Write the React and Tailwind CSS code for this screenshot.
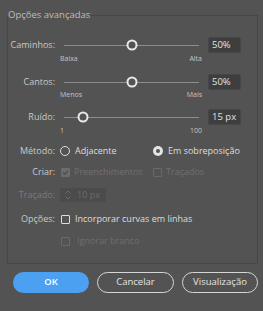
import React from "react";

const font = { fontFamily: '"Open Sans", "Noto Sans", sans-serif' };

function Slider({ pct }) {
  return (
    <div className="relative ml-[8px] w-[135px] h-[16px] flex items-center">
      <div className="w-full h-px bg-[#8c8c8c]" />
      <div
        className="absolute top-1/2 w-[11px] h-[11px] -translate-x-1/2 -translate-y-1/2 rounded-full border-2 border-[#e8e8e8] bg-[#535353]"
        style={{ left: `${pct}%` }}
      />
    </div>
  );
}

function NumBox({ value }) {
  return (
    <div className="ml-[9px] w-[33px] h-[16px] bg-[#3e3e3e] border border-[#474747] rounded-[2px] flex items-center pl-[3px] text-[9.5px] text-[#e2e2e2]">
      {value}
    </div>
  );
}

function Label({ children, disabled }) {
  return (
    <div
      className={
        "w-[48px] shrink-0 text-right pr-[1px] text-[9px] leading-[14px] " +
        (disabled ? "text-[#7a7a7a]" : "text-[#c9c9c9]")
      }
    >
      {children}
    </div>
  );
}

function SliderRow({ label, pct, value, lo, hi, mt, subMt }) {
  return (
    <>
      <div className={"flex items-center h-[16px] " + mt}>
        <Label>{label}</Label>
        <Slider pct={pct} />
        <NumBox value={value} />
      </div>
      <div
        className={
          "ml-[52px] w-[142px] h-[10px] flex justify-between items-center text-[7px] text-[#c4c4c4] " +
          subMt
        }
      >
        <span>{lo}</span>
        <span>{hi}</span>
      </div>
    </>
  );
}

function Checkbox({ checked, disabled }) {
  if (checked) {
    return (
      <div className="w-[9px] h-[9px] rounded-[1px] bg-[#6c6c6c] flex items-center justify-center">
        <svg width="7" height="7" viewBox="0 0 7 7">
          <path d="M1 3.6 L2.8 5.3 L6 1.6" stroke="#4f4f4f" strokeWidth="1.4" fill="none" />
        </svg>
      </div>
    );
  }
  return (
    <div
      className={
        "w-[9px] h-[9px] rounded-[1px] border " +
        (disabled ? "border-[#6a6a6a]" : "border-[#dcdcdc]")
      }
    />
  );
}

export default function App() {
  return (
    <div className="w-[263px] h-[311px] bg-[#535353] overflow-hidden" style={font}>
      <fieldset className="ml-[7px] mt-[9px] w-[251px] border border-[#474747] pb-[15px]">
        <legend className="text-[9.5px] leading-[12px] text-[#bdbdbd]">Opções avançadas</legend>

        <SliderRow label="Caminhos:" pct={50} value="50%" lo="Baixa" hi="Alta" mt="mt-[16px]" subMt="mt-[1px]" />
        <SliderRow label="Cantos:" pct={50} value="50%" lo="Menos" hi="Mais" mt="mt-[10px]" subMt="mt-0" />
        <SliderRow label="Ruído:" pct={14} value="15 px" lo="1" hi="100" mt="mt-[9px]" subMt="mt-[1px]" />

        <div className="flex items-center h-[14px] mt-[8px]">
          <Label>Método:</Label>
          <div className="ml-[4px] w-[93px] flex items-center">
            <div className="w-[10px] h-[10px] rounded-full border border-[#dedede]" />
            <span className="ml-[5px] text-[9px] text-[#dedede]">Adjacente</span>
          </div>
          <div className="flex items-center">
            <div className="w-[10px] h-[10px] rounded-full bg-[#e4e4e4] flex items-center justify-center">
              <div className="w-[4px] h-[4px] rounded-full bg-[#535353]" />
            </div>
            <span className="ml-[5px] text-[9px] text-[#dedede]">Em sobreposição</span>
          </div>
        </div>

        <div className="flex items-center h-[14px] mt-[7px]">
          <Label>Criar:</Label>
          <div className="ml-[5px] w-[92px] flex items-center">
            <Checkbox checked disabled />
            <span className="ml-[4px] text-[9px] text-[#707070]">Preenchimentos</span>
          </div>
          <div className="flex items-center">
            <Checkbox disabled />
            <span className="ml-[4px] text-[9px] text-[#707070]">Traçados</span>
          </div>
        </div>

        <div className="flex items-center h-[14px] mt-[9px]">
          <Label disabled>Traçado:</Label>
          <div className="ml-[4px] w-[46px] h-[14px] bg-[#4b4b4b] rounded-[2px] flex items-center">
            <svg width="14" height="12" viewBox="0 0 14 12" className="ml-[1px]">
              <path d="M4.5 4.5 L7 2 L9.5 4.5" stroke="#686868" strokeWidth="1" fill="none" />
              <path d="M4.5 7.5 L7 10 L9.5 7.5" stroke="#686868" strokeWidth="1" fill="none" />
            </svg>
            <span className="ml-[2px] text-[9px] text-[#6c6c6c]">10 px</span>
          </div>
        </div>

        <div className="flex items-center h-[14px] mt-[10px]">
          <Label>Opções:</Label>
          <div className="ml-[5px] flex items-center">
            <Checkbox />
            <span className="ml-[5px] text-[9px] text-[#dedede]">Incorporar curvas em linhas</span>
          </div>
        </div>

        <div className="flex items-center h-[14px] mt-[8px] ml-[53px]">
          <Checkbox disabled />
          <span className="ml-[7px] text-[9px] text-[#6e6e6e]">Ignorar branco</span>
        </div>
      </fieldset>

      <div className="mt-[8px] ml-[13px] flex gap-[8px]">
        <button className="w-[76px] h-[21px] rounded-full bg-[#4ba0f2] text-white text-[9.5px] font-semibold">
          OK
        </button>
        <button className="w-[77px] h-[21px] rounded-full border-[1.5px] border-[#d6d6d6] text-[#e4e4e4] text-[9.5px]">
          Cancelar
        </button>
        <button className="w-[76px] h-[21px] rounded-full border-[1.5px] border-[#d6d6d6] text-[#e4e4e4] text-[9.5px]">
          Visualização
        </button>
      </div>
    </div>
  );
}
